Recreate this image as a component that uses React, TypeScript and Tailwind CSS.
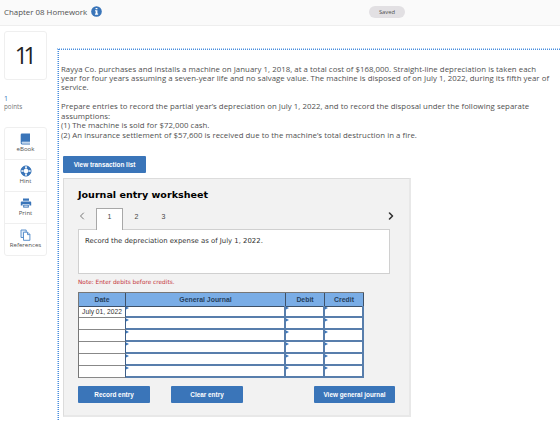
import React from "react";
import { ChevronLeft, ChevronRight } from "lucide-react";

const tools = [
  {
    label: "eBook",
    icon: (
      <svg viewBox="0 0 11 12" className="w-[11px] h-3">
        <path d="M2 .5h8v8.3H2.3a.9.9 0 0 0 0 1.7H10v1H2A1.5 1.5 0 0 1 .7 10V1.8A1.3 1.3 0 0 1 2 .5z" fill="#3a75b9" />
        <path d="M2 9.3h8v1H2z" fill="#a9c6e6" />
      </svg>
    ),
  },
  {
    label: "Hint",
    icon: (
      <svg viewBox="0 0 12 12" className="w-[12px] h-3" fill="none">
        <circle cx="6" cy="6" r="3.8" stroke="#3a75b9" strokeWidth="2.9" />
        <path d="M6 .9v2.6M6 8.5v2.6M.9 6h2.6M8.5 6h2.6" stroke="#ffffff" strokeWidth="1.7" />
        <circle cx="6" cy="6" r="5.1" stroke="#3a75b9" strokeWidth=".7" />
      </svg>
    ),
  },
  {
    label: "Print",
    icon: (
      <svg viewBox="0 0 12 12" className="w-[12px] h-3">
        <path d="M3 1.5h6v2.2H3zM1.8 4.4h8.4c.6 0 1 .4 1 1v3.1H9.4V7H2.6v1.5H.8V5.4c0-.6.4-1 1-1z" fill="#3a75b9" />
        <path d="M3.2 7.6h5.6v3H3.2z" fill="#3a75b9" />
        <path d="M4.2 8.6h3.6v1H4.2z" fill="#ffffff" />
      </svg>
    ),
  },
  {
    label: "References",
    icon: (
      <svg viewBox="0 0 11 12" className="w-[11px] h-3" stroke="#4c86c6" strokeWidth=".9">
        <path d="M1 1h5.2v7.5H1z" fill="#e3eefa" />
        <path d="M3.5 3.2h4.2l2.2 2.2v5.9H3.5z" fill="#ffffff" />
        <path d="M7.5 3.3v2.3h2.3" fill="none" />
      </svg>
    ),
  },
];

const rows = ["July 01, 2022", "", "", "", "", ""];

const question = [
  "Rayya Co. purchases and installs a machine on January 1, 2018, at a total cost of $168,000. Straight-line depreciation is taken each",
  "year for four years assuming a seven-year life and no salvage value. The machine is disposed of on July 1, 2022, during its fifth year of",
  "service.",
  "",
  "Prepare entries to record the partial year’s depreciation on July 1, 2022, and to record the disposal under the following separate",
  "assumptions:",
  "(1) The machine is sold for $72,000 cash.",
  "(2) An insurance settlement of $57,600 is received due to the machine’s total destruction in a fire.",
];

function ActionButton({ children, className }: { children: React.ReactNode; className: string }) {
  return (
    <button className={`h-[17px] rounded-[1px] bg-[#3a75b9] text-white font-bold text-[6.4px] leading-[17px] whitespace-nowrap font-['Liberation_Sans',sans-serif] ${className}`}>
      {children}
    </button>
  );
}

function EntryCell() {
  return (
    <div className="h-3 border-r-2 border-b-2 border-[#587eac]">
      <svg viewBox="0 0 3 4" className="block w-[3px] h-[4px]">
        <path d="M0 .5L3 2 0 3.5z" fill="#3a75b9" />
      </svg>
    </div>
  );
}

function JournalTable() {
  return (
    <div className="w-[286px] border-t border-l border-[#777777]">
      <div className="grid grid-cols-[47px_160px_39px_39px] h-[13px] bg-[#7aade6] text-center font-bold text-[6.9px] leading-[13px] text-[#263f5c] font-['Liberation_Sans',sans-serif]">
        {["Date", "General Journal", "Debit", "Credit"].map((title) => (
          <div key={title} className="border-r border-b border-[#3e5168]">{title}</div>
        ))}
      </div>
      {rows.map((date, i) => (
        <div key={i} className="grid grid-cols-[47px_160px_39px_39px] h-3 bg-white">
          <div className="border-r border-b border-r-[#3e5f88] border-b-[#888888] text-center text-[6.7px] leading-[11px] whitespace-nowrap text-[#333333] font-['Liberation_Sans',sans-serif]">{date}</div>
          <EntryCell />
          <EntryCell />
          <EntryCell />
        </div>
      ))}
    </div>
  );
}

function Worksheet() {
  return (
    <section className="w-[348px] h-[239px] bg-[#f2f2f2] border border-r-2 border-b-2 border-[#dcdcdc] border-r-[#e8e8e8] border-b-[#e8e8e8] pl-[14px] pt-[9px]">
      <h2 className="h-[20px] font-bold text-[9.55px] leading-[14px] text-black whitespace-nowrap font-['DejaVu_Sans',sans-serif]">Journal entry worksheet</h2>
      <div className="flex w-[319px] h-[22px] text-[7px] text-[#444444] font-['Liberation_Sans',sans-serif]">
        <ChevronLeft className="w-[12px] h-[12px] mt-[2px] -ml-[2px] text-[#777777]" />
        <div className="relative z-10 w-[27px] h-[22px] ml-[8px] bg-white border border-b-0 border-[#a8a8a8] text-center leading-[16px]">1</div>
        <div className="w-[27px] text-center leading-[18px]">2</div>
        <div className="w-[27px] text-center leading-[18px]">3</div>
        <ChevronRight strokeWidth={3.2} className="w-[12px] h-[12px] mt-[2px] ml-auto text-[#333333]" />
      </div>
      <div className="-mt-px w-[312px] h-[45px] bg-white border border-[#d0d0d0] pl-[6px] pt-[6px] text-[6.9px] leading-[10px] text-[#333333] whitespace-nowrap font-['DejaVu_Sans',sans-serif]">
        Record the depreciation expense as of July 1, 2022.
      </div>
      <p className="mt-[3px] h-[15px] text-[5.8px] leading-[10px] text-[#c5363c] whitespace-nowrap font-['DejaVu_Sans',sans-serif]">Note: Enter debits before credits.</p>
      <JournalTable />
      <div className="flex mt-[8px]">
        <ActionButton className="w-[72px]">Record entry</ActionButton>
        <ActionButton className="w-[72px] ml-[21px]">Clear entry</ActionButton>
        <ActionButton className="w-[81px] ml-[71px]">View general journal</ActionButton>
      </div>
    </section>
  );
}

export default function App() {
  return (
    <div className="w-[560px] h-[421px] overflow-hidden bg-white text-[#505050] font-['Open_Sans',sans-serif]">
      <header className="flex items-center h-[26px] pl-[4px] pb-[2px] bg-[#fafafa] border-b border-[#eeeeee]">
        <h1 className="w-[84px] text-[7.9px] leading-[12px] whitespace-nowrap">Chapter 08 Homework</h1>
        <svg viewBox="0 0 12 12" className="w-[11px] h-[11px] ml-[3px]">
          <circle cx="6" cy="6" r="5.8" fill="#3a75b9" />
          <path d="M5 2.1h2v1.5H5zM4.4 4.7H7v3.6h.8v1.2H4.3V8.3h.8V5.8h-.7z" fill="#ffffff" />
        </svg>
        <span className="w-[36px] h-[12px] ml-[267px] rounded-full bg-[#e2e0e3] text-center text-[5.8px] leading-[12px]">Saved</span>
      </header>
      <div className="flex">
        <aside className="w-[43px] ml-[4px] mr-[10px] pt-[5px] shrink-0">
          <div className="h-[49px] rounded-[3px] border border-[#efefef] text-center text-[23px] tracking-[-4.5px] pr-[4px] leading-[47px] text-[#222222]">11</div>
          <div className="mt-[14px] text-[7px] leading-[9px] text-[#3a75b9]">1</div>
          <div className="text-[6.3px] leading-[8px] text-[#777777]">points</div>
          <nav className="mt-[16px] h-[129px] rounded-[3px] border border-[#efefef]">
            {tools.map((tool, i) => (
              <div key={tool.label} className={`flex flex-col items-center ${i > 0 ? "h-[32px] pt-[5px] border-t border-[#efefef]" : "h-[31px] pt-[5px]"}`}>
                {tool.icon}
                <span className="text-[6.1px] leading-[8px] whitespace-nowrap">{tool.label}</span>
              </div>
            ))}
          </nav>
        </aside>
        <main className="flex-1 min-w-0 h-[374px] mt-[22px] border-t border-l border-dotted border-[#a3c8f2]">
          <div className="h-full border-t border-l border-dotted border-[#4a8ddb] pl-[2px] pt-[14.5px]">
            <div className="h-[91.5px] text-[7.8px] tracking-[0.045px]">
              {question.map((line, i) => (
                <p key={i} className="h-[9.45px] leading-[9.45px] whitespace-nowrap">{line}</p>
              ))}
            </div>
            <div className="pl-[2px]">
              <ActionButton className="block w-[83px] mb-[5px]">View transaction list</ActionButton>
              <Worksheet />
            </div>
          </div>
        </main>
      </div>
    </div>
  );
}
